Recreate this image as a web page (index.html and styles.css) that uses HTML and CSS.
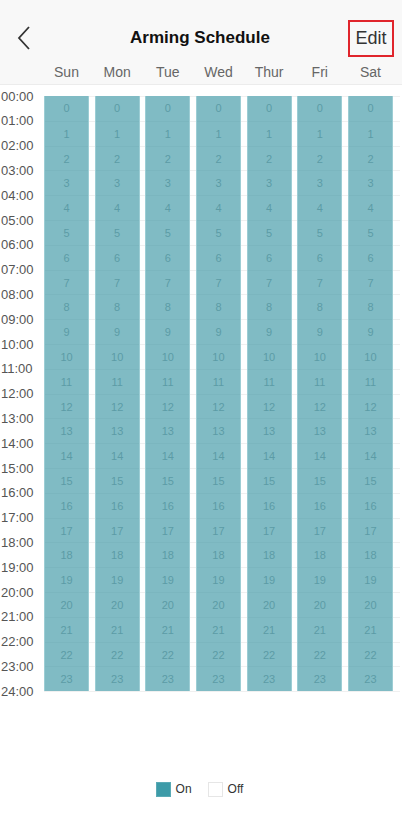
FILE: index.html
```html
<!DOCTYPE html>
<html lang="en">

<head>
    <meta charset="UTF-8">
    <meta name="viewport" content="width=device-width, initial-scale=1.0">
    <title>Arming Schedule</title>
    <link rel="stylesheet" href="styles.css">
</head>

<body>
    <div class="top">
        <div class="header">
            <button class="back" aria-label="Back">
                <svg width="16" height="26" viewBox="0 0 16 26">
                    <path d="M13 2 L3 13 L13 24" fill="none" stroke="#333" stroke-width="1.8" />
                </svg>
            </button>
            <h1>Arming Schedule</h1>
            <button class="edit">Edit</button>
        </div>
        <div class="days">
            <span>Sun</span><span>Mon</span><span>Tue</span><span>Wed</span><span>Thur</span><span>Fri</span><span>Sat</span>
        </div>
    </div>

    <div class="schedule">
        <div class="times" id="times"></div>
        <div class="grid" id="grid"></div>
    </div>

    <div class="legend">
        <span class="swatch on"></span><span class="label">On</span>
        <span class="swatch off"></span><span class="label">Off</span>
    </div>

    <script>
        const times = document.getElementById('times');
        const grid = document.getElementById('grid');

        for (let h = 0; h <= 24; h++) {
            const t = document.createElement('div');
            t.className = 'time';
            t.textContent = String(h).padStart(2, '0') + ':00';
            times.appendChild(t);
        }

        for (let d = 0; d < 7; d++) {
            const col = document.createElement('div');
            col.className = 'day-col';
            for (let h = 0; h < 24; h++) {
                const cell = document.createElement('div');
                cell.className = 'cell';
                cell.textContent = h;
                col.appendChild(cell);
            }
            grid.appendChild(col);
        }
    </script>
</body>

</html>
```

FILE: styles.css
```css
body {
    font-family: "Liberation Sans", Arial, sans-serif;
    margin: 0;
    padding: 0;
    background-color: #fff;
    color: #333;
}

.top {
    background-color: #f8f8f8;
    border-bottom: 1px solid #ececec;
}

.header {
    height: 60px;
    display: flex;
    align-items: center;
    justify-content: space-between;
    padding: 16px 8px 0 12px;
    box-sizing: border-box;
}

.back {
    background: none;
    border: none;
    padding: 2px 4px 0 4px;
    width: 40px;
    text-align: left;
    cursor: pointer;
}

h1 {
    margin: 0;
    font-size: 17px;
    font-weight: bold;
    color: #111;
}

.edit {
    background: none;
    border: 2px solid #e0252c;
    width: 46px;
    height: 37px;
    margin-top: 1px;
    font-family: inherit;
    font-size: 18px;
    color: #333;
    padding: 0;
    cursor: pointer;
}

.days {
    display: grid;
    grid-template-columns: repeat(7, 45px);
    column-gap: 5.67px;
    padding-left: 44px;
    height: 24px;
    font-size: 14px;
    color: #666;
}

.days span {
    text-align: center;
    line-height: 24px;
}

.schedule {
    display: flex;
    margin-top: 11px;
}

.times {
    width: 44px;
    margin-top: -11.4px;
}

.time {
    height: 24.8px;
    line-height: 24.8px;
    font-size: 13px;
    color: #555;
    padding-left: 1px;
}

.grid {
    display: grid;
    grid-template-columns: repeat(7, 45px);
    column-gap: 5.67px;
    padding-right: 7px;
    height: 595px;
    background-image: repeating-linear-gradient(to bottom, #f0f0f0 0, #f0f0f0 1px, transparent 1px, transparent 24.8px);
    border-bottom: 1px solid #f0f0f0;
}

.day-col {
    background-color: #80bbc4;
    border-left: 1px solid #9ccdd4;
    border-right: 1px solid #9ccdd4;
    box-sizing: border-box;
}

.cell {
    height: 24.8px;
    line-height: 24.8px;
    text-align: center;
    font-size: 11px;
    color: #5c9ba6;
    border-top: 1px solid rgba(90, 150, 160, 0.12);
    box-sizing: border-box;
}

.cell:first-child {
    border-top: none;
}

.legend {
    display: flex;
    justify-content: center;
    align-items: center;
    margin-top: 77px;
    font-size: 12px;
    color: #333;
    padding-right: 3px;
}

.swatch {
    width: 15px;
    height: 15px;
    box-sizing: border-box;
}

.swatch.on {
    background-color: #3d9ba8;
    border: 1px solid #5aaab5;
}

.swatch.off {
    background-color: #fff;
    border: 1px solid #e6e6e6;
    margin-left: 16px;
}

.label {
    margin-left: 5px;
}
```
